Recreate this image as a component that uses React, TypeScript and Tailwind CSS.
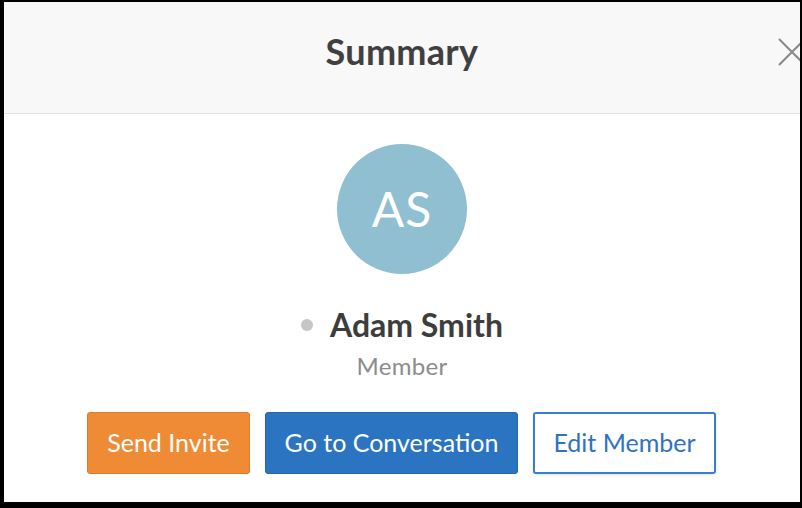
export default function App() {
  return (
    <div className="w-[802px] h-[508px] bg-black pt-[2px] pl-[4px] pr-[2px] pb-[6px]" style={{ fontFamily: 'Lato, "Open Sans", sans-serif' }}>
      <div className="relative w-full h-full bg-white overflow-hidden flex flex-col">
        {/* Header */}
        <div className="h-[112px] bg-[#f8f8f8] border-b border-[#e2e2e2] flex items-center justify-center pb-[14px]">
          <h1 className="text-[36px] font-bold text-[#404040] leading-[44px] tracking-[0.3px]">Summary</h1>
        </div>
        <button className="absolute top-[36px] right-[-6px] w-[28px] h-[28px] text-[#8a8a8a]">
          <svg viewBox="0 0 28 28" className="w-full h-full" fill="none" stroke="currentColor" strokeWidth={2}>
            <path d="M1 1 L27 27 M27 1 L1 27" />
          </svg>
        </button>

        {/* Body */}
        <div className="flex flex-col items-center pt-[30px]">
          <div className="w-[130px] h-[130px] rounded-full bg-[#8fbfd1] flex items-center justify-center">
            <span className="text-[48px] text-white font-normal tracking-[1px]">AS</span>
          </div>

          <div className="mt-[32px] flex items-center gap-[17px]">
            <span className="w-[12px] h-[12px] rounded-full bg-[#c6c6c6]" />
            <span className="text-[32px] font-bold text-[#3d3d3d] leading-[38px]">Adam Smith</span>
          </div>
          <div className="mt-[7px] text-[24px] text-[#8c8c8c] leading-[30px] tracking-[0.3px]">Member</div>

          <div className="mt-[31px] mr-[1px] flex gap-[15px]">
            <button className="w-[163px] h-[62px] rounded-[3px] bg-[#f08b35] border border-[#e07c28] text-white text-[25px]">
              Send Invite
            </button>
            <button className="w-[253px] h-[62px] rounded-[3px] bg-[#2b74c2] border border-[#2566ad] text-white text-[25px]">
              Go to Conversation
            </button>
            <button className="w-[183px] h-[62px] rounded-[3px] bg-white border-2 border-[#3b7fcb] text-[#2f72bf] text-[25px] shadow-[0_1px_3px_rgba(0,0,0,0.12)]">
              Edit Member
            </button>
          </div>
        </div>
      </div>
    </div>
  );
}
